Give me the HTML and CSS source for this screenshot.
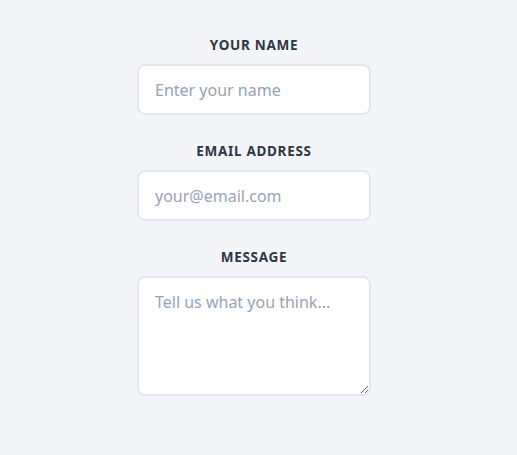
FILE: index.html
```html
<!DOCTYPE html>
<html>
<head>
<meta charset="utf-8">
<link rel="stylesheet" href="styles.css">
</head>
<body>
<form class="form">
  <div class="field">
    <label class="label" for="name">Your Name</label>
    <input class="input" id="name" type="text" placeholder="Enter your name">
  </div>
  <div class="field">
    <label class="label" for="email">Email Address</label>
    <input class="input" id="email" type="email" placeholder="your@email.com">
  </div>
  <div class="field">
    <label class="label" for="msg">Message</label>
    <textarea class="input textarea" id="msg" placeholder="Tell us what you think..."></textarea>
  </div>
</form>
</body>
</html>
```
FILE: styles.css
```css
html, body {
  margin: 0;
  padding: 0;
  background: #f3f5f9;
}
body {
  font-family: "Noto Sans", "Open Sans", sans-serif;
  display: flex;
  justify-content: center;
  padding: 36px 9px 0 0;
}
.form {
  width: 234px;
  display: flex;
  flex-direction: column;
  gap: 27px;
}
.field {
  display: flex;
  flex-direction: column;
  align-items: center;
}
.label {
  font-size: 13.5px;
  font-weight: 700;
  line-height: 18px;
  letter-spacing: 0.7px;
  text-transform: uppercase;
  color: #2d3748;
  margin-bottom: 10px;
}
.input {
  box-sizing: border-box;
  width: 234px;
  height: 51px;
  border: 2px solid #e2e8f0;
  border-radius: 8px;
  background: #fff;
  padding: 12px 16px;
  font-family: inherit;
  font-size: 16px;
  color: #2d3748;
  outline: none;
  margin: 0;
}
.input::placeholder {
  color: #94a3b8;
}
.textarea {
  height: 120px;
  resize: vertical;
  display: block;
  line-height: 24px;
}
```
